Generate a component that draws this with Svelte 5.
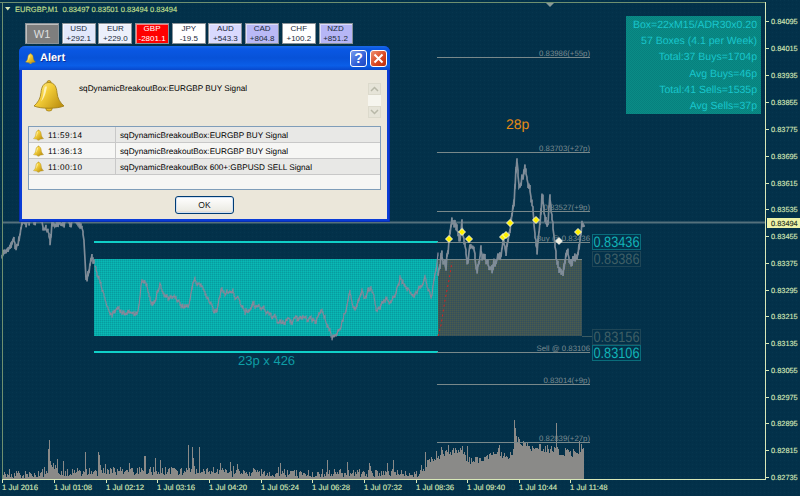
<script>
  // small seeded generator so the noise on the series stays the same on each run
  let seed = 7;
  function rnd() {
    seed = (seed * 16807) % 2147483647;
    return seed / 2147483647;
  }

  function interp(points, x) {
    for (let i = 1; i < points.length; i++) {
      if (x <= points[i][0]) {
        const [x0, y0] = points[i - 1];
        const [x1, y1] = points[i];
        return y0 + ((y1 - y0) * (x - x0)) / (x1 - x0 || 1);
      }
    }
    return points[points.length - 1][1];
  }

  // high/low stroke per pixel on top of a short random walk, like M1 bars
  function series(points, jitter) {
    const start = Math.ceil(points[0][0]);
    const end = Math.floor(points[points.length - 1][0]);
    let d = "";
    let walk = 0;
    for (let x = start; x <= end; x += 1) {
      walk = walk * 0.72 + (rnd() - 0.5) * jitter * 1.7;
      const mid = interp(points, x) + walk;
      const lo = mid - rnd() * jitter * 0.6;
      const hi = mid + rnd() * jitter * 0.6;
      d += `${d ? "L" : "M"}${x} ${lo.toFixed(1)}L${x} ${hi.toFixed(1)}`;
    }
    return d;
  }

  const leftPrice = [
    [2, 262], [5, 255], [10, 240], [14, 238], [16, 252], [20, 234], [23, 222], [40, 218],
    [50, 240], [52, 222], [72, 222], [78, 228], [84, 240], [86, 281], [89, 268], [92, 254], [94, 258],
  ];

  // read off the 3x crop of the teal box
  const boxPrice = [
    [285, 130], [295, 175], [310, 215], [320, 240], [335, 280], [350, 255], [365, 270], [385, 265],
    [405, 290], [415, 260], [425, 180], [440, 210], [455, 270], [480, 185], [495, 225], [520, 230],
    [540, 255], [565, 250], [580, 170], [600, 190], [625, 240], [650, 280], [665, 210], [690, 210],
    [715, 240], [735, 265], [770, 260], [800, 285], [845, 305], [890, 295], [900, 285], [935, 295],
    [945, 310], [968, 265], [995, 345], [1020, 325], [1050, 225], [1065, 275], [1085, 210], [1095, 240],
    [1115, 200], [1130, 265], [1160, 240], [1175, 245], [1200, 170], [1240, 225], [1275, 165], [1295, 230],
    [1310, 140], [1316, 100],
  ].map(([x, y]) => [x / 3, 220 + y / 3]);

  const rightPrice = [
    [438, 268], [441, 256], [446, 264], [449, 240], [453, 219], [458, 240], [462, 230], [467, 254],
    [473, 240], [477, 276], [481, 255], [487, 268], [490, 274], [494, 255], [500, 262], [503, 240],
    [506, 248], [510, 225], [514, 190], [517, 155], [519, 192], [525, 172], [530, 190], [533, 210],
    [537, 248], [542, 195], [547, 227], [550, 201], [554, 227], [558, 254], [562, 264], [570, 262],
    [577, 245], [582, 216], [584, 222],
  ];

  const leftPath = series(leftPrice, 5);
  const boxPath = series(boxPrice, 3.5);
  const rightPath = series(rightPrice, 7);
  const redPath = "M438 336L441 325L445 300L449 280L452 262";

  const volumeTop = [
    [2, 474], [47, 473], [48, 452], [52, 465], [60, 472], [120, 470], [180, 470], [200, 471],
    [230, 472], [300, 473], [340, 472], [400, 472], [420, 474], [425, 465], [430, 458], [445, 452],
    [460, 450], [470, 460], [480, 458], [490, 453], [500, 453], [512, 455], [516, 438], [530, 446],
    [550, 448], [560, 451], [575, 452], [582, 448],
  ];
  const spikes = {
    49: 440, 85: 452, 98: 452, 99: 455, 145: 456, 160: 460, 188: 445, 192: 447, 193: 458, 199: 447,
    144: 456, 155: 458, 220: 463, 230: 462, 327: 460, 347: 462, 369: 463, 387: 463, 425: 452,
    436: 451, 452: 450, 462: 446, 514: 420, 515: 428, 556: 423, 581: 444,
  };
  let volumePath = "";
  for (let x = 2; x <= 583; x++) {
    const extra = rnd() > 0.9 ? rnd() * 12 : 0;
    const top = spikes[x] ?? interp(volumeTop, x) + (rnd() * 8 - 3) - extra;
    volumePath += `M${x + 0.5} 479V${Math.min(top, 478).toFixed(0)}`;
  }

  const levels = [
    { y: 57, label: "0.83986(+55p)" },
    { y: 152, label: "0.83703(+27p)" },
    { y: 211, label: "0.83527(+9p)" },
    { y: 242, label: "Buy @ 0.83436" },
    { y: 352, label: "Sell @ 0.83106" },
    { y: 384, label: "0.83014(+9p)" },
    { y: 442, label: "0.82839(+27p)" },
  ];

  const priceTicks = [
    ["0.84095", 21], ["0.84015", 48], ["0.83935", 75], ["0.83855", 102], ["0.83775", 129],
    ["0.83695", 156], ["0.83615", 183], ["0.83535", 209], ["0.83455", 236], ["0.83375", 263],
    ["0.83295", 290], ["0.83215", 316], ["0.83135", 343], ["0.83055", 370], ["0.82975", 397],
    ["0.82895", 423], ["0.82815", 450], ["0.82735", 477],
  ];

  const timeTicks = [
    ["1 Jul 2016", 2], ["1 Jul 01:08", 54], ["1 Jul 02:12", 106], ["1 Jul 03:16", 157],
    ["1 Jul 04:20", 209], ["1 Jul 05:24", 261], ["1 Jul 06:28", 312], ["1 Jul 07:32", 364],
    ["1 Jul 08:36", 416], ["1 Jul 09:40", 467], ["1 Jul 10:44", 519], ["1 Jul 11:48", 570],
  ];

  const signals = [
    [449, 239], [462, 232], [469, 239], [503, 237], [506, 235], [510, 223], [536, 220], [578, 232],
  ];

  const priceTags = [
    { y: 234, text: "0.83436", on: true },
    { y: 251, text: "0.83386", on: false },
    { y: 329, text: "0.83156", on: false },
    { y: 345, text: "0.83106", on: true },
  ];

  const currencies = [
    { name: "USD", value: "+292.1", bg: "#e2e8fb" },
    { name: "EUR", value: "+229.0", bg: "#ecf0fb" },
    { name: "GBP", value: "-2801.1", bg: "#ff0000", light: true },
    { name: "JPY", value: "-19.5", bg: "#ffffff" },
    { name: "AUD", value: "+543.3", bg: "#d9d9fd" },
    { name: "CAD", value: "+804.8", bg: "#b9b9f6" },
    { name: "CHF", value: "+100.2", bg: "#ffffff" },
    { name: "NZD", value: "+851.2", bg: "#b6b6f6" },
  ];

  const stats = [
    "Box=22xM15/ADR30x0.20",
    "57 Boxes (4.1 per Week)",
    "Total:37 Buys=1704p",
    "Avg Buys=46p",
    "Total:41 Sells=1535p",
    "Avg Sells=37p",
  ];

  const alerts = [
    { time: "11:59:14", text: "sqDynamicBreakoutBox:EURGBP BUY Signal" },
    { time: "11:36:13", text: "sqDynamicBreakoutBox:EURGBP BUY Signal" },
    { time: "11:00:10", text: "sqDynamicBreakoutBox 600+:GBPUSD SELL Signal" },
  ];
</script>

<div class="terminal">
  <svg class="defs" width="0" height="0" aria-hidden="true">
    <defs>
      <linearGradient id="bellFill" x1="0" y1="0" x2="1" y2="0.7">
        <stop offset="0" stop-color="#fff3a0" />
        <stop offset="0.45" stop-color="#f5cf3a" />
        <stop offset="1" stop-color="#c09412" />
      </linearGradient>
      <symbol id="bell" viewBox="0 0 32 32">
        <ellipse cx="16" cy="29" rx="3.2" ry="2.6" fill="#e8bb2a" stroke="#9a7a14" stroke-width="0.7" />
        <circle cx="16" cy="3" r="2" fill="#e8bb2a" stroke="#9a7a14" stroke-width="0.7" />
        <path
          d="M16 3C10.500 3 8.500 7.500 8 13C7.500 19 5 23 1 26.500C8 29.500 24 29.500 31 26.500C27 23 24.500 19 24 13C23.500 7.500 21.500 3 16 3Z"
          fill="url(#bellFill)"
          stroke="#9a7a14"
          stroke-width="0.8"
        />
        <path d="M12 7C10.500 10 11 16 8 22C12 18 13 12 14 7Z" fill="#fffbe0" opacity="0.75" />
      </symbol>
    </defs>
  </svg>

  <svg class="chart" width="800" height="496" viewBox="0 0 800 496">
    <defs>
      <pattern id="bgDots" width="4" height="4" patternUnits="userSpaceOnUse">
        <rect width="4" height="4" fill="#03314a" />
        <rect width="1" height="1" fill="#07364e" />
        <rect x="2" y="2" width="1" height="1" fill="#022e46" />
      </pattern>
      <pattern id="tealDots" width="2" height="2" patternUnits="userSpaceOnUse">
        <rect width="2" height="2" fill="#06aeac" />
        <rect width="1" height="1" fill="#0a9a9e" />
        <rect x="1" y="1" width="1" height="1" fill="#0cb8b4" />
      </pattern>
      <pattern id="oliveDots" width="2" height="2" patternUnits="userSpaceOnUse">
        <rect width="2" height="2" fill="#3f5456" />
        <rect width="1" height="1" fill="#4a5c4c" />
        <rect x="1" y="1" width="1" height="1" fill="#34505c" />
      </pattern>
    </defs>

    <rect width="800" height="496" fill="url(#bgDots)" />

    <rect x="94" y="259" width="344" height="77" fill="url(#tealDots)" />
    <rect x="438" y="259" width="144" height="77" fill="url(#oliveDots)" />
    <line x1="438" x2="582" y1="259.500" y2="259.500" class="level" />

    <path d={volumePath} stroke="#8a8a88" stroke-width="1" fill="none" />

    <line x1="2" x2="765" y1="222.500" y2="222.500" stroke="#55717c" stroke-width="2" />

    <path d={leftPath} class="price" />
    <path d={boxPath} class="price thin" />
    <path d={rightPath} class="price" />
    <path d={redPath} stroke="#d82020" stroke-width="1" stroke-dasharray="2 3" fill="none" />

    <line x1="94" x2="438" y1="242" y2="242" class="cyan" />
    <line x1="94" x2="438" y1="352" y2="352" class="cyan" />

    {#each levels as level}
      <line x1="437" x2="590" y1={level.y + 0.5} y2={level.y + 0.5} class="level" />
      <text x="590" y={level.y - 1} text-anchor="end" class="level-label">{level.label}</text>
    {/each}

    {#each signals as [x, y]}
      <path d="M{x} {y - 3.500}L{x + 3.500} {y}L{x} {y + 3.500}L{x - 3.500} {y}Z" fill="#fff200" stroke="#fff" stroke-width="0.8" />
    {/each}
    <path d="M559 237.500L562.500 241L559 244.500L555.500 241Z" fill="#f0efe0" stroke="#fff" stroke-width="0.6" />

    {#each priceTags as tag}
      <rect
        x="592.500"
        y={tag.y + 0.5}
        width="48"
        height="15"
        fill="none"
        stroke={tag.on ? "#10a8ac" : "#3b5a62"}
        stroke-dasharray="1 1"
      />
      <text
        x="593.500"
        y={tag.y + 13}
        class="tag"
        textLength="46"
        lengthAdjust="spacingAndGlyphs"
        fill={tag.on ? "#12b4b8" : "#3f5f66"}>{tag.text}</text>
    {/each}
    <line x1="582" x2="592" y1="336.500" y2="336.500" stroke="#3b5a62" />

    <text x="506" y="129" class="orange">28p</text>
    <text x="238" y="365" class="size-label">23p x 426</text>

    <!-- frame and axes -->
    <line x1="0" x2="765" y1="2.500" y2="2.500" stroke="#6f9070" />
    <line x1="2.500" x2="2.500" y1="2" y2="479" stroke="#6f9070" />
    <line x1="765.500" x2="765.500" y1="2" y2="480" stroke="#d8e8b8" />
    <line x1="2" x2="766" y1="479.500" y2="479.500" stroke="#d8e8b8" />
    <path d="M546 3H554L550 7Z" fill="#8a9a98" />

    {#each priceTicks as [label, y]}
      <line x1="766" x2="769" y1={y + 0.5} y2={y + 0.5} stroke="#d8e8b8" />
      <text x="771" y={y + 3} class="axis price-label">{label}</text>
    {/each}

    {#each timeTicks as [label, x]}
      <line x1={x + 0.5} x2={x + 0.5} y1="480" y2="483" stroke="#d8e8b8" />
      <text x={x} y="490" class="axis">{label}</text>
    {/each}

    <rect x="767" y="218" width="33" height="10" fill="#eef2a8" />
    <text x="771" y="226" class="axis price-label dark">0.83494</text>

    <path d="M5 7H10.500L7.750 10.500Z" fill="#d8e8b8" />
    <text x="15" y="12" class="axis symbol">EURGBP,M1&#160; 0.83497 0.83501 0.83494 0.83494</text>
  </svg>

  <div class="currency-bar">
    <button class="period">W1</button>
    {#each currencies as cur}
      <button class="currency" class:light={cur.light} style="background: {cur.bg}">
        <span>{cur.name}</span>
        <span>{cur.value}</span>
      </button>
    {/each}
  </div>

  <div class="stats">
    {#each stats as line}
      <div>{line}</div>
    {/each}
  </div>

  <div class="dialog">
    <header class="titlebar">
      <svg class="title-bell" width="11" height="11"><use href="#bell" /></svg>
      <span class="title">Alert</span>
      <button class="caption help">?</button>
      <button class="caption close" aria-label="Close">
        <svg width="11" height="11" viewBox="0 0 11 11">
          <path d="M1.500 1.500L9.500 9.500M9.500 1.500L1.500 9.500" stroke="#fff" stroke-width="2" />
        </svg>
      </button>
    </header>

    <div class="body">
      <div class="message">
        <svg class="big-bell" width="32" height="33"><use href="#bell" /></svg>
        <p>sqDynamicBreakoutBox:EURGBP BUY Signal</p>
        <div class="spinner">
          <span class="arrow">
            <svg width="9" height="6" viewBox="0 0 9 6"><path d="M1 5L4.500 1.500L8 5" class="chev" /></svg>
          </span>
          <span class="track"></span>
          <span class="arrow">
            <svg width="9" height="6" viewBox="0 0 9 6"><path d="M1 1L4.500 4.500L8 1" class="chev" /></svg>
          </span>
        </div>
      </div>

      <div class="list">
        {#each alerts as row, i}
          <div class="row" class:odd={i % 2 === 0}>
            <div class="cell-time">
              <svg width="11" height="12"><use href="#bell" /></svg>
              <span>{row.time}</span>
            </div>
            <div class="cell-text">{row.text}</div>
          </div>
        {/each}
      </div>

      <div class="actions">
        <button class="ok">OK</button>
      </div>
    </div>
  </div>
</div>

<style>
  :global(body) {
    margin: 0;
    background: #03314a;
  }

  .terminal {
    position: relative;
    width: 800px;
    height: 496px;
    overflow: hidden;
    font-family: "Liberation Sans", Arial, sans-serif;
    text-rendering: geometricPrecision;
  }

  .defs {
    position: absolute;
  }

  .chart {
    display: block;
  }

  .price {
    fill: none;
    stroke: #7f8c98;
    stroke-width: 1.700;
  }

  .price.thin {
    stroke: #85889a;
    stroke-width: 1.200;
  }

  .level {
    stroke: #78888a;
    stroke-width: 1;
  }

  .cyan {
    stroke: #10d0c8;
    stroke-width: 2;
  }

  .level-label {
    font-size: 7.800px;
    fill: #7a8b90;
  }

  .axis {
    font-size: 7.800px;
    fill: #d8e8b8;
    stroke: #d8e8b8;
    stroke-width: 0.12;
  }

  .axis.price-label {
    font-size: 7.400px;
  }

  .axis.dark {
    fill: #203020;
    stroke: #203020;
  }

  .axis.symbol {
    font-size: 7.500px;
    fill: #c8e090;
    stroke: #c8e090;
  }

  .tag {
    font-size: 15px;
  }

  .orange {
    font-size: 14px;
    fill: #e58a14;
  }

  .size-label {
    font-size: 13px;
    fill: #0f9ea6;
  }

  .currency-bar {
    position: absolute;
    left: 25px;
    top: 23px;
    display: flex;
    gap: 2.700px;
  }

  .currency-bar button {
    height: 21px;
    padding: 0;
    border: 1px solid #8a9298;
    box-shadow: inset 1px 1px 0 rgba(255, 255, 255, 0.5);
    font-family: inherit;
    color: #1a2a3a;
  }

  .period {
    width: 34px;
    background: #7e7e7e;
    font-size: 11px;
    color: #dedede !important;
  }

  .currency {
    width: 34px;
    display: flex;
    flex-direction: column;
    align-items: center;
    justify-content: center;
    font-size: 8px;
    line-height: 9.500px;
  }

  .currency.light {
    color: #fff !important;
  }

  .stats {
    position: absolute;
    left: 626px;
    top: 16px;
    width: 131px;
    height: 97px;
    padding: 1px 4px 0 0;
    background: repeating-conic-gradient(#0a8c86 0 25%, #07807e 0 50%) 0 0 / 2px 2px;
    color: #19c6cc;
    font-size: 10.500px;
    line-height: 16.200px;
    text-align: right;
    white-space: nowrap;
  }

  .dialog {
    position: absolute;
    left: 19px;
    top: 46px;
    width: 371px;
    height: 176px;
    box-sizing: border-box;
    display: flex;
    flex-direction: column;
    padding: 0 3px 3px;
    background: #0a3cd6;
    border-radius: 6px 6px 0 0;
    box-shadow: inset 1px 0 0 #0830b0, inset -1px 0 0 #0830b0, inset 0 -1px 0 #0830b0;
  }

  .titlebar {
    flex: none;
    height: 24px;
    margin: 0 -3px;
    padding: 0 3px 0 6px;
    display: flex;
    align-items: center;
    gap: 4px;
    border-radius: 6px 6px 0 0;
    background: linear-gradient(#1a6ae8 0, #0a58e4 12%, #0752d8 50%, #0a5ee8 82%, #0848cc 100%);
  }

  .title {
    flex: 1;
    color: #fff;
    font-size: 11px;
    font-weight: 700;
    text-shadow: 1px 1px 0 #0a2f9a;
  }

  .caption {
    width: 17px;
    height: 17px;
    padding: 0;
    display: flex;
    align-items: center;
    justify-content: center;
    border: 1px solid #fff;
    border-radius: 3px;
    color: #fff;
  }

  .help {
    background: linear-gradient(135deg, #7a9cec, #2f5ed8 60%, #1f46c0);
    font: 700 14px "Liberation Sans", sans-serif;
  }

  .close {
    margin-left: -1px;
    background: linear-gradient(135deg, #ee9070, #d8451f 60%, #b82e10);
  }

  .body {
    flex: 1;
    display: flex;
    flex-direction: column;
    background: #ebe7da;
    padding: 9px 6px 0;
    font-size: 8.200px;
    color: #000;
  }

  .message {
    display: flex;
    align-items: flex-start;
    height: 47px;
    padding-left: 5px;
  }

  .big-bell {
    flex: none;
    margin-top: 0;
  }

  .message p {
    flex: 1;
    margin: 5px 0 0 14px;
  }

  .spinner {
    flex: none;
    display: flex;
    flex-direction: column;
    width: 13px;
    margin-top: 4px;
  }

  .arrow {
    height: 12px;
    display: flex;
    align-items: center;
    justify-content: center;
    background: #e6e4d8;
    border: 1px solid #dcdacc;
    box-sizing: border-box;
  }

  .track {
    height: 11px;
    background: #f6f5ee;
  }

  .chev {
    fill: none;
    stroke: #b8b8a8;
    stroke-width: 1.500;
  }

  .list {
    height: 64px;
    box-sizing: border-box;
    border: 1px solid #7f9db9;
    background: #f6f6f4;
  }

  .row {
    display: flex;
    height: 16px;
    box-sizing: border-box;
    border-bottom: 1px solid #c8c8c8;
    align-items: center;
  }

  .row.odd {
    background: #e8e8e6;
  }

  .cell-time {
    width: 87px;
    height: 100%;
    box-sizing: border-box;
    flex: none;
    display: flex;
    align-items: center;
    gap: 4px;
    padding: 1px 0 0 4px;
    border-right: 1px solid #c8c8c8;
    letter-spacing: 0.4px;
  }

  .cell-text {
    padding: 1px 0 0 4px;
  }

  .actions {
    flex: 1;
    display: flex;
    justify-content: center;
    padding-top: 6px;
  }

  .ok {
    width: 59px;
    height: 18px;
    padding: 0;
    border: 1px solid #003c74;
    border-radius: 3px;
    background: linear-gradient(#fff, #ecebe4 85%, #d6d0c5);
    box-shadow: inset 0 0 0 1px #cfe0f4;
    font: 8.500px "Liberation Sans", sans-serif;
    color: #111;
  }
</style>
